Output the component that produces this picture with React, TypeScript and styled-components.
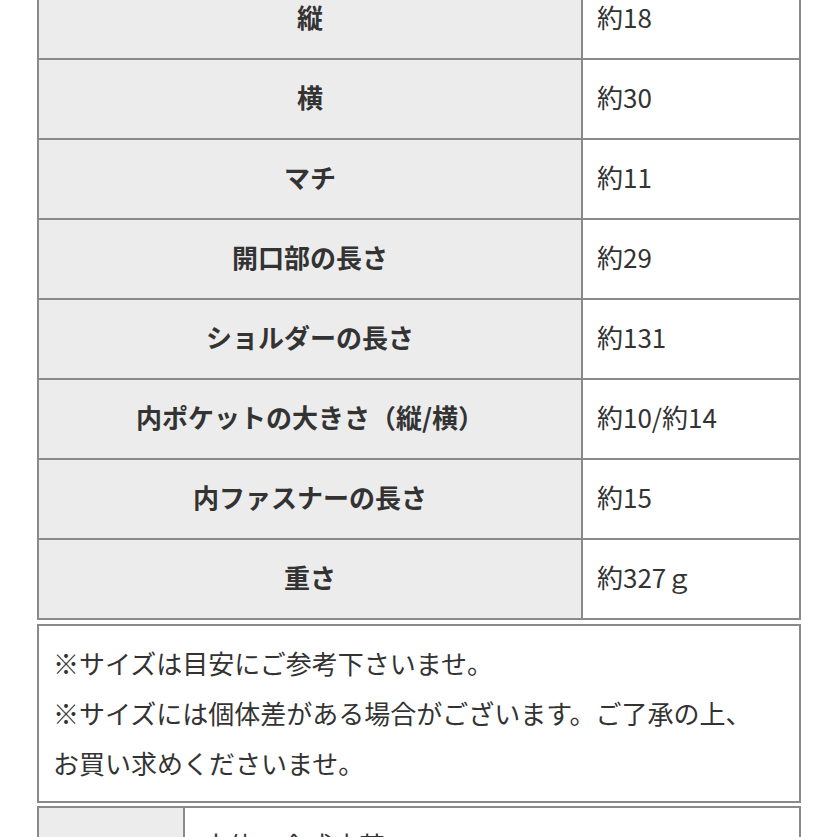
import styled, { createGlobalStyle } from "styled-components";

const GlobalStyle = createGlobalStyle`
    html, body {
        margin: 0;
        padding: 0;
        background: #ffffff;
    }
    body {
        font-family: "Noto Sans CJK JP", "Noto Sans", sans-serif;
        color: #333333;
        overflow: hidden;
    }
`

const Page = styled.div`
    width: 837px;
    height: 837px;
    overflow: hidden;
`

// the screenshot is scrolled a little into the size table
const Content = styled.div`
    margin-top: -22px;
    padding: 0 36px 0 37px;
`

const SpecTable = styled.table`
    width: 100%;
    border-collapse: separate;
    border-spacing: 0;
    border: 1px solid #8a8a8a;
`

const Label = styled.th`
    width: 544px;
    height: 80px;
    padding: 0 0 6px;
    box-sizing: border-box;
    background: #ececec;
    border: 1px solid #8a8a8a;
    font-size: 26px;
    font-weight: 700;
    color: #333333;
    text-align: center;
    vertical-align: middle;
`

const Value = styled.td`
    height: 80px;
    padding: 0 0 6px 14px;
    box-sizing: border-box;
    background: #ffffff;
    border: 1px solid #8a8a8a;
    font-size: 26px;
    color: #333333;
    vertical-align: middle;
`

const Notes = styled.div`
    margin-top: 4px;
    border: 2px solid #8a8a8a;
    padding: 12px 14px 13px;
    font-size: 26px;
    line-height: 50px;
    color: #333333;
`

const NoteLine = styled.p`
    margin: 0;
`

const MaterialTable = styled(SpecTable)`
    margin-top: 3px;
`

const MaterialLabel = styled(Label)`
    width: 146px;
    height: 130px;
`

const MaterialValue = styled(Value)`
    height: 130px;
    padding: 18px 0 0 18px;
    vertical-align: top;
`

const specs = [
    { label: "縦", value: "約18" },
    { label: "横", value: "約30" },
    { label: "マチ", value: "約11" },
    { label: "開口部の長さ", value: "約29" },
    { label: "ショルダーの長さ", value: "約131" },
    { label: "内ポケットの大きさ（縦/横）", value: "約10/約14" },
    { label: "内ファスナーの長さ", value: "約15" },
    { label: "重さ", value: "約327ｇ" },
]

const App = () => {
    return (
        <Page>
            <GlobalStyle />
            <Content>
                <SpecTable>
                    <tbody>
                        {specs.map((row, i) => (
                            <tr key={i}>
                                <Label>{row.label}</Label>
                                <Value>{row.value}</Value>
                            </tr>
                        ))}
                    </tbody>
                </SpecTable>
                <Notes>
                    <NoteLine>※サイズは目安にご参考下さいませ。</NoteLine>
                    <NoteLine>※サイズには個体差がある場合がございます。ご了承の上、</NoteLine>
                    <NoteLine>お買い求めくださいませ。</NoteLine>
                </Notes>
                <MaterialTable>
                    <tbody>
                        <tr>
                            <MaterialLabel>素材</MaterialLabel>
                            <MaterialValue>本体：合成皮革</MaterialValue>
                        </tr>
                    </tbody>
                </MaterialTable>
            </Content>
        </Page>
    )
}

export default App
